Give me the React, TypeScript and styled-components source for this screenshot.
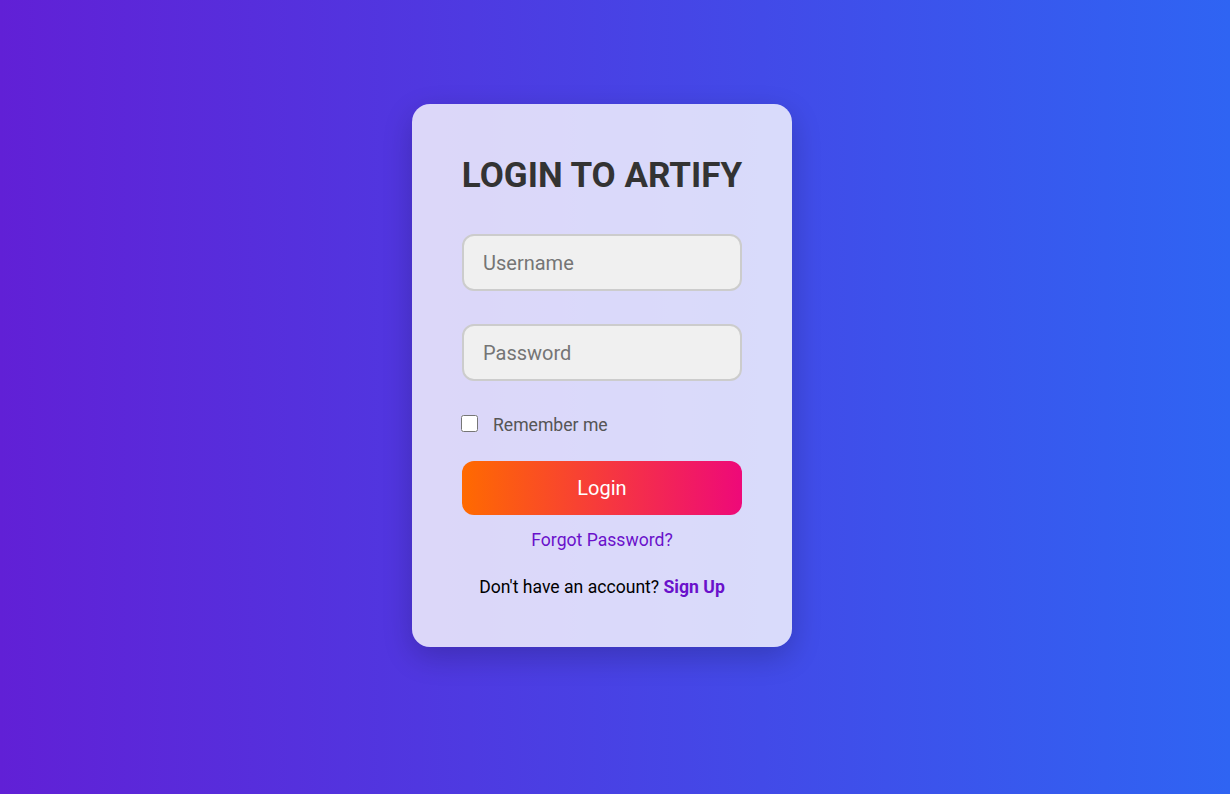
import React from "react";
import styled, { createGlobalStyle } from "styled-components";

const Global = createGlobalStyle`
  * { box-sizing: border-box; }
  html, body { margin: 0; padding: 0; }
  body {
    font-family: Roboto, "Liberation Sans", sans-serif;
  }
`;

const Page = styled.div`
  min-height: 794px;
  width: 100%;
  display: flex;
  align-items: center;
  justify-content: center;
  padding: 0 26px 43px 0;
  background: linear-gradient(to right, #6120d6, #2f64f3);
`;

const Card = styled.form`
  width: 380px;
  padding: 50px 50px 49px;
  border-radius: 18px;
  background: rgba(255, 255, 255, 0.8);
  box-shadow: 0 10px 30px rgba(0, 0, 0, 0.2);
  display: flex;
  flex-direction: column;
  align-items: stretch;
`;

const Title = styled.h1`
  margin: 0 -10px 36px;
  white-space: nowrap;
  text-align: center;
  font-size: 35px;
  font-weight: 700;
  color: #333;
  line-height: 44px;
`;

const Input = styled.input`
  height: 57px;
  width: 100%;
  margin-bottom: 33px;
  padding: 0 19px;
  border: 2px solid #ccc;
  border-radius: 12px;
  background: #f0f0f0;
  font-family: inherit;
  font-size: 20px;
  color: #333;
  outline: none;
  &::placeholder { color: #757575; }
`;

const CheckRow = styled.label`
  display: flex;
  align-items: center;
  gap: 15px;
  margin: 1px 0 26px -1px;
  font-size: 17.6px;
  color: #555;
  height: 20px;
`;

const Check = styled.input`
  width: 17px;
  height: 17px;
  margin: -3px 0 0;
`;

const Button = styled.button`
  height: 54px;
  border: none;
  border-radius: 12px;
  background: linear-gradient(to right, #ff6a00, #ee0979);
  color: #fff;
  font-family: inherit;
  font-size: 20px;
  cursor: pointer;
`;

const Forgot = styled.a`
  margin-top: 14px;
  text-align: center;
  font-size: 17.6px;
  color: #6a11cb;
  text-decoration: none;
  line-height: 22px;
`;

const SignText = styled.p`
  margin: 25px 0 0;
  text-align: center;
  font-size: 17.6px;
  color: #000;
  line-height: 22px;
`;

const SignLink = styled.a`
  font-weight: 700;
  color: #6a11cb;
  text-decoration: none;
`;

export default function App() {
  return (
    <>
      <Global />
      <Page>
        <Card onSubmit={(e) => e.preventDefault()}>
          <Title>LOGIN TO ARTIFY</Title>
          <Input type="text" placeholder="Username" />
          <Input type="password" placeholder="Password" />
          <CheckRow>
            <Check type="checkbox" />
            Remember me
          </CheckRow>
          <Button type="submit">Login</Button>
          <Forgot href="#">Forgot Password?</Forgot>
          <SignText>
            Don't have an account? <SignLink href="#">Sign Up</SignLink>
          </SignText>
        </Card>
      </Page>
    </>
  );
}
